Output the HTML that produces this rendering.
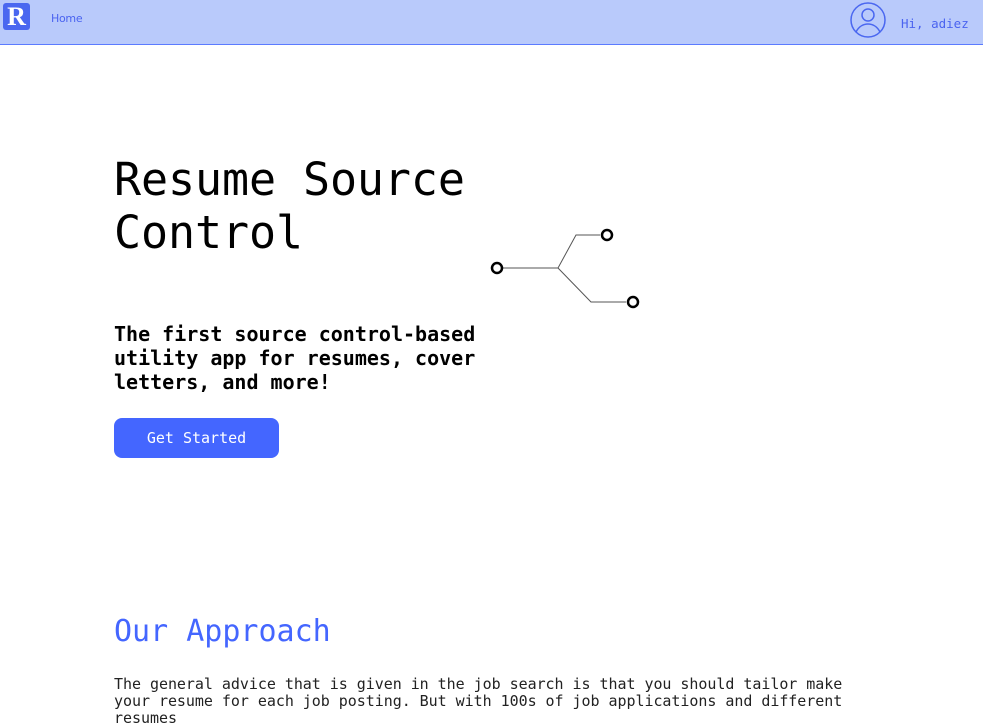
<!DOCTYPE html>
<html><head><style>
body{margin:0;background:#fff;font-family:"DejaVu Sans Mono","Liberation Mono",monospace;width:983px;height:714px;overflow:hidden;position:relative}
.nav{position:absolute;left:0;top:0;width:983px;height:44px;background:#b9cafb;border-bottom:1px solid #5b7bff}
.logo{position:absolute;left:3px;top:3px;width:27px;height:27px;background:#4a67f0;border-radius:3px;color:#fff;font:bold 26px "Liberation Serif",serif;line-height:28px;text-align:center}
.home{position:absolute;left:51px;top:12px;font-family:"DejaVu Sans",sans-serif;font-size:11px;letter-spacing:-0.3px;color:#4a63f0}
.hi{position:absolute;left:901px;top:16px;font-size:12.5px;color:#4a63f0}
h1{position:absolute;left:114px;top:153px;margin:0;font-size:45px;font-weight:normal;line-height:53px;color:#000;letter-spacing:-0.1px}
.sub{position:absolute;left:114px;top:322px;margin:0;font-size:20px;font-weight:bold;line-height:24px;width:380px}
.btn{position:absolute;left:114px;top:418px;width:165px;height:40px;background:#4466ff;border-radius:8px;color:#fff;font-size:15px;line-height:40px;text-align:center}
h2{position:absolute;left:114px;top:613px;margin:0;font-size:30px;font-weight:normal;color:#4466ff;line-height:38px}
p{position:absolute;left:114px;top:676px;margin:0;font-size:15px;line-height:17px;color:#222;width:740px;letter-spacing:-0.04px}
</style></head><body>
<div class="nav">
<div class="logo">R</div>
<div class="home">Home</div>
<svg style="position:absolute;left:850px;top:2px" width="36" height="36" viewBox="0 0 36 36" fill="none" stroke="#4a67f0" stroke-width="1.5"><circle cx="18" cy="18" r="17"/><circle cx="18" cy="13" r="6"/><path d="M6 30c3-6 8-8 12-8s9 2 12 8"/></svg>
<div class="hi">Hi, adiez</div>
</div>
<h1>Resume Source<br>Control</h1>
<svg style="position:absolute;left:488px;top:226px" width="156" height="86" viewBox="0 0 156 86" fill="none"><path d="M14 42H70L88 9H112M70 42L103 76H138" stroke="#555" stroke-width="1"/><g stroke="#000" stroke-width="2.5" fill="#fff"><circle cx="9" cy="42" r="5"/><circle cx="119" cy="9" r="5"/><circle cx="145" cy="76" r="5"/></g></svg>
<div class="sub">The first source control-based utility app for resumes, cover letters, and more!</div>
<div class="btn">Get Started</div>
<h2>Our Approach</h2>
<p>The general advice that is given in the job search is that you should tailor make your resume for each job posting. But with 100s of job applications and different resumes</p>
</body></html>
